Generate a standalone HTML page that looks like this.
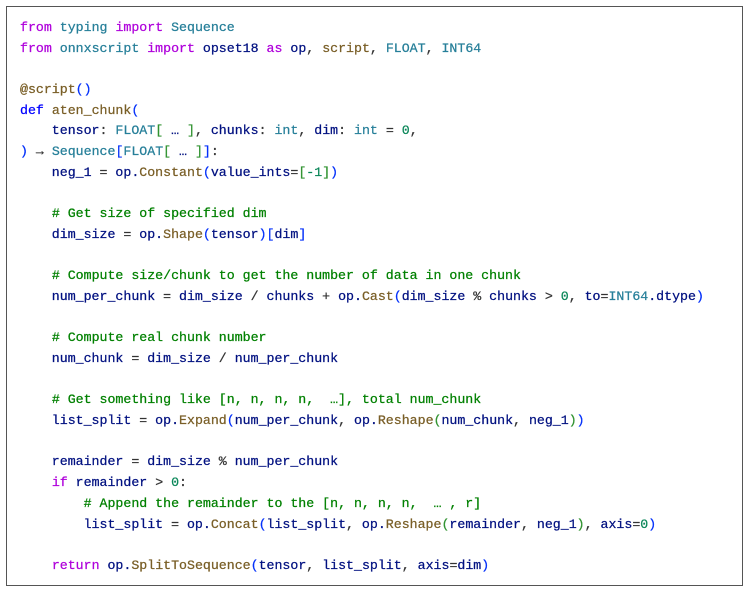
<!DOCTYPE html>
<html><head><meta charset="utf-8"><style>
html,body{margin:0;padding:0;background:#fff;width:750px;height:593px;overflow:hidden}
.box{position:absolute;left:6px;top:6px;width:737px;height:580px;border:1.5px solid #555;box-sizing:border-box}
pre{position:absolute;left:20px;top:18px;margin:0;font-family:"Liberation Mono","DejaVu Sans Mono",monospace;font-size:13.25px;line-height:20.69px;color:#001080;white-space:pre;-webkit-text-stroke:0.25px currentColor}
.k{color:#af00db}.t{color:#267f99}.f{color:#795e26}.d{color:#0000ff}.c{color:#008000}.n{color:#098658}
.b1{color:#0431fa}.b2{color:#319331}.b3{color:#7b3814}.p{color:#333}
</style></head><body><div class="box"></div>
<pre><span class="k">from</span> <span class="t">typing</span> <span class="k">import</span> <span class="t">Sequence</span>
<span class="k">from</span> <span class="t">onnxscript</span> <span class="k">import</span> opset18 <span class="k">as</span> op<span class="p">,</span> <span class="f">script</span><span class="p">,</span> <span class="t">FLOAT</span><span class="p">,</span> <span class="t">INT64</span>

<span class="f">@script</span><span class="b1">()</span>
<span class="d">def</span> <span class="f">aten_chunk</span><span class="b1">(</span>
    tensor<span class="p">:</span> <span class="t">FLOAT</span><span class="b2">[</span> … <span class="b2">]</span><span class="p">,</span> chunks<span class="p">:</span> <span class="t">int</span><span class="p">,</span> dim<span class="p">:</span> <span class="t">int</span> <span class="p">=</span> <span class="n">0</span><span class="p">,</span>
<span class="b1">)</span> <span class="p">→</span> <span class="t">Sequence</span><span class="b1">[</span><span class="t">FLOAT</span><span class="b2">[</span> … <span class="b2">]</span><span class="b1">]</span><span class="p">:</span>
    neg_1 <span class="p">=</span> op.<span class="f">Constant</span><span class="b1">(</span>value_ints<span class="p">=</span><span class="b2">[</span><span class="n">-1</span><span class="b2">]</span><span class="b1">)</span>

    <span class="c"># Get size of specified dim</span>
    dim_size <span class="p">=</span> op.<span class="f">Shape</span><span class="b1">(</span>tensor<span class="b1">)[</span>dim<span class="b1">]</span>

    <span class="c"># Compute size/chunk to get the number of data in one chunk</span>
    num_per_chunk <span class="p">=</span> dim_size <span class="p">/</span> chunks <span class="p">+</span> op.<span class="f">Cast</span><span class="b1">(</span>dim_size <span class="p">%</span> chunks <span class="p">&gt;</span> <span class="n">0</span><span class="p">,</span> to<span class="p">=</span><span class="t">INT64</span>.dtype<span class="b1">)</span>

    <span class="c"># Compute real chunk number</span>
    num_chunk <span class="p">=</span> dim_size <span class="p">/</span> num_per_chunk

    <span class="c"># Get something like [n, n, n, n,  …], total num_chunk</span>
    list_split <span class="p">=</span> op.<span class="f">Expand</span><span class="b1">(</span>num_per_chunk<span class="p">,</span> op.<span class="f">Reshape</span><span class="b2">(</span>num_chunk<span class="p">,</span> neg_1<span class="b2">)</span><span class="b1">)</span>

    remainder <span class="p">=</span> dim_size <span class="p">%</span> num_per_chunk
    <span class="k">if</span> remainder <span class="p">&gt;</span> <span class="n">0</span><span class="p">:</span>
        <span class="c"># Append the remainder to the [n, n, n, n,  … , r]</span>
        list_split <span class="p">=</span> op.<span class="f">Concat</span><span class="b1">(</span>list_split<span class="p">,</span> op.<span class="f">Reshape</span><span class="b2">(</span>remainder<span class="p">,</span> neg_1<span class="b2">)</span><span class="p">,</span> axis<span class="p">=</span><span class="n">0</span><span class="b1">)</span>

    <span class="k">return</span> op.<span class="f">SplitToSequence</span><span class="b1">(</span>tensor<span class="p">,</span> list_split<span class="p">,</span> axis<span class="p">=</span>dim<span class="b1">)</span></pre>
</body></html>
